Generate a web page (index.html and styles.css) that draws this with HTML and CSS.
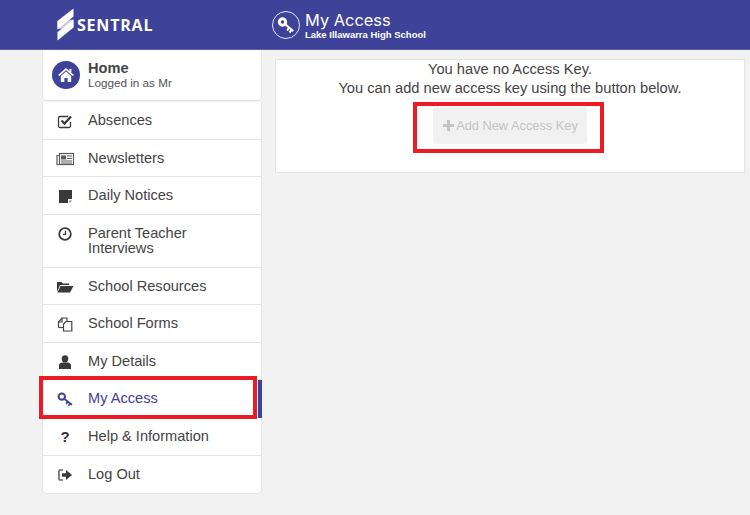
FILE: index.html
```html
<!DOCTYPE html>
<html>
<head>
    <title>My Access</title>
    <link rel="stylesheet" href="styles.css">
</head>
<body>
    <header class="topbar">
        <div class="brand">
            <svg class="brand-mark" width="17" height="33" viewBox="0 0 17 33">
                <polygon points="0.5,13 0.5,21 16.5,19.5 16.5,11.5" fill="#c6c8e5"></polygon>
                <polygon points="16.5,0.5 16.5,8.5 0.5,21.5 0.5,13" fill="#ffffff"></polygon>
                <polygon points="16.5,11.5 16.5,19.5 0.5,32.5 0.5,24" fill="#ffffff"></polygon>
            </svg>
            <span class="brand-name">SENTRAL</span>
        </div>
        <div class="page-title">
            <span class="title-icon">
                <svg width="18" height="18" viewBox="0 0 18 18" fill="none" stroke="#ffffff" stroke-linecap="round">
                    <circle cx="5.5" cy="6" r="3.2" stroke-width="3"></circle>
                    <path d="M8.5 8.5 L15.5 14.5 M12 11.5 L10.8 13.8 M14.5 13.5 L13.2 15.8" stroke-width="2.2"></path>
                </svg>
            </span>
            <div class="title-text">
                <h1>My Access</h1>
                <p>Lake Illawarra High School</p>
            </div>
        </div>
    </header>

    <div class="layout">
        <nav class="sidebar">
            <div class="home-card">
                <span class="home-icon">
                    <svg width="16" height="14" viewBox="0 0 16 14" fill="#ffffff">
                        <path d="M8 0 L16 7 L14.6 8 L8 2.3 L1.4 8 L0 7 Z"></path>
                        <path d="M2.8 8 L8 3.6 L13.2 8 V14 H9.6 V10 H6.4 V14 H2.8 Z"></path>
                        <rect x="11.4" y="0.8" width="2" height="3.4"></rect>
                    </svg>
                </span>
                <div>
                    <div class="home-title">Home</div>
                    <div class="home-sub">Logged in as Mr</div>
                </div>
            </div>
            <ul class="menu">
                <li>
                    <svg class="icon" viewBox="0 0 16 16" fill="none" stroke="#3a3a3a">
                        <path d="M13.5 9 V13 a1.5 1.5 0 0 1 -1.5 1.5 H3 a1.5 1.5 0 0 1 -1.5 -1.5 V5 a1.5 1.5 0 0 1 1.5 -1.5 H11" stroke-width="1.3"></path>
                        <path d="M4.5 7.5 L7.5 10.5 L14 3.5" stroke-width="2.3"></path>
                    </svg>
                    <span>Absences</span>
                </li>
                <li>
                    <svg class="icon icon-wide" viewBox="0 0 18 16" fill="none" stroke="#5a5a5a">
                        <rect x="3.5" y="2.5" width="14" height="11" stroke-width="1.2"></rect>
                        <path d="M3.5 4.5 H1 V13.5 H3.5" stroke-width="1.2"></path>
                        <rect x="5" y="4.5" width="5" height="4" fill="#5a5a5a" stroke="none"></rect>
                        <path d="M11 5 H16 M11 7.5 H16 M5 10 H16 M5 12 H16" stroke-width="1"></path>
                    </svg>
                    <span>Newsletters</span>
                </li>
                <li>
                    <svg class="icon" viewBox="0 0 16 16">
                        <path d="M2 2 H15 V11 L14.5 11 H11 V15 H2 Z" fill="#3a3a3a"></path>
                        <path d="M12.5 12.5 H15 L12.5 15 Z" fill="#4a78b8"></path>
                    </svg>
                    <span>Daily Notices</span>
                </li>
                <li class="tall">
                    <svg class="icon" viewBox="0 0 16 16" fill="none" stroke="#3a3a3a">
                        <circle cx="8" cy="8" r="5.8" stroke-width="1.8"></circle>
                        <path d="M8.5 4.8 V8.4 H6" stroke-width="1.3"></path>
                    </svg>
                    <span>Parent Teacher Interviews</span>
                </li>
                <li>
                    <svg class="icon icon-wide" viewBox="0 0 17 16" fill="#3a3a3a">
                        <path d="M0.5 13 V3 H5 L6.5 4.5 H12.5 V6 H3.5 Z"></path>
                        <path d="M4 7 H17 L13.5 13.5 H1 Z"></path>
                    </svg>
                    <span>School Resources</span>
                </li>
                <li>
                    <svg class="icon" viewBox="0 0 16 16" fill="none" stroke="#444444" stroke-width="1.2">
                        <path d="M1.5 11.5 V6 L5 2 H10 V5.5"></path>
                        <path d="M5 2 V6 H1.5"></path>
                        <path d="M1.5 11.5 H6.5"></path>
                        <path d="M6.5 15 V8 L9 5.5 H14.8 V15 Z"></path>
                    </svg>
                    <span>School Forms</span>
                </li>
                <li>
                    <svg class="icon" viewBox="0 0 16 16" fill="#3a3a3a">
                        <ellipse cx="8" cy="4.8" rx="3.3" ry="3.6"></ellipse>
                        <path d="M2 15 V11.5 Q2 8.8 5.5 8.5 H10.5 Q14 8.8 14 11.5 V15 Z"></path>
                    </svg>
                    <span>My Details</span>
                </li>
                <li class="active">
                    <svg class="icon" viewBox="0 0 16 16" fill="none" stroke="#3f4199" stroke-linecap="round">
                        <circle cx="4.8" cy="5.6" r="3.2" stroke-width="2"></circle>
                        <path d="M7.5 8 L14.5 13.5 M10.5 10.3 L9.5 12.4 M13 12.3 L12 14.2" stroke-width="1.7"></path>
                    </svg>
                    <span>My Access</span>
                </li>
                <li>
                    <span class="icon help-icon">?</span>
                    <span>Help &amp; Information</span>
                </li>
                <li class="last">
                    <svg class="icon" viewBox="0 0 16 16">
                        <path d="M6 3 H3 a1 1 0 0 0 -1 1 V12 a1 1 0 0 0 1 1 H6" fill="none" stroke="#666666" stroke-width="1.6"></path>
                        <path d="M5 6.2 H9 V3 L15 8 L9 13 V9.8 H5 Z" fill="#3a3a3a"></path>
                    </svg>
                    <span>Log Out</span>
                </li>
            </ul>
        </nav>

        <main class="content">
            <div class="panel">
                <p>You have no Access Key.</p>
                <p>You can add new access key using the button below.</p>
                <button class="add-key" disabled>
                    <svg width="11" height="11" viewBox="0 0 11 11" fill="#c4c4c4">
                        <path d="M4 0 H7 V4 H11 V7 H7 V11 H4 V7 H0 V4 H4 Z"></path>
                    </svg>
                    Add New Access Key
                </button>
            </div>
        </main>
    </div>

    <div class="mark mark-menu"></div>
    <div class="mark mark-button"></div>
</body>
</html>
```

FILE: styles.css
```css
* {
    box-sizing: border-box;
}
html, body {
    height: 100%;
}
body {
    margin: 0;
    background-color: #f2f2f2;
    color: #444444;
    font-family: "Liberation Sans", Arial, sans-serif;
    overflow: hidden;
}
.topbar {
    display: flex;
    align-items: center;
    height: 50px;
    background-color: #3f4299;
    border-bottom: 1px solid #5b5ea8;
    color: #ffffff;
}
.brand {
    display: flex;
    align-items: center;
    gap: 3px;
    width: 272px;
    padding-left: 57px;
}
.brand-name {
    font-family: "Open Sans", sans-serif;
    font-weight: 700;
    font-size: 16px;
    letter-spacing: 0.8px;
}
.page-title {
    display: flex;
    align-items: center;
    gap: 5px;
}
.title-icon {
    display: flex;
    align-items: center;
    justify-content: center;
    width: 28px;
    height: 28px;
    border: 1px solid #e6e6f3;
    border-radius: 50%;
}
.title-text {
    padding-top: 1px;
}
.title-text h1 {
    margin: 0;
    font-family: Inter, sans-serif;
    font-weight: 400;
    font-size: 16.4px;
    line-height: 20px;
}
.title-text p {
    margin: 0;
    font-size: 9.5px;
    font-weight: 700;
    line-height: 10px;
}
.layout {
    display: flex;
    padding-left: 42px;
}
.sidebar {
    width: 220px;
    flex-shrink: 0;
}
.home-card {
    display: flex;
    align-items: center;
    gap: 8px;
    height: 51px;
    padding-left: 9px;
    background-color: #ffffff;
    border: 1px solid #e4e4e4;
    border-top: none;
    border-radius: 0 0 5px 5px;
}
.home-icon {
    display: flex;
    align-items: center;
    justify-content: center;
    width: 28px;
    height: 28px;
    background-color: #3f4299;
    border-radius: 50%;
}
.home-title {
    font-size: 14.6px;
    font-weight: 700;
    line-height: 16px;
}
.home-sub {
    font-size: 11.7px;
    line-height: 14px;
    color: #555555;
}
.menu {
    margin: 1px 0 0;
    padding: 0;
    list-style: none;
    background-color: #ffffff;
    border: 1px solid #e4e4e4;
    border-top: none;
    border-radius: 0 0 5px 5px;
}
.menu li {
    position: relative;
    display: flex;
    align-items: flex-start;
    height: 37.6px;
    padding: 11px 8px 0 45px;
    font-size: 14.6px;
    line-height: 15px;
    border-bottom: 1px solid #e4e4e4;
}
.menu li.tall {
    height: 52.8px;
}
.menu li.last {
    border-bottom: none;
}
.menu li.active {
    color: #3f4199;
}
.menu li.active::after {
    content: "";
    position: absolute;
    top: 0;
    right: -1px;
    bottom: -1px;
    width: 4px;
    background-color: #3f4299;
}
.icon {
    position: absolute;
    left: 14px;
    top: 11px;
    width: 16px;
    height: 16px;
}
.icon-wide {
    left: 13px;
    width: 18px;
}
.help-icon {
    font-size: 15px;
    font-weight: 700;
    line-height: 16px;
    text-align: center;
    color: #333333;
}
.content {
    flex: 1;
    padding: 9px 5px 0 13px;
}
.panel {
    display: flex;
    flex-direction: column;
    align-items: center;
    height: 114px;
    background-color: #ffffff;
    border: 1px solid #e4e4e4;
    font-size: 14.7px;
    line-height: 19px;
}
.panel p {
    margin: 0;
}
.add-key {
    display: flex;
    align-items: center;
    gap: 2px;
    height: 37px;
    margin-top: 9px;
    padding: 0 9px 0 10px;
    background-color: #f1f1f1;
    border: none;
    border-radius: 3px;
    color: #c4c4c4;
    font-family: inherit;
    font-size: 12.8px;
}
.mark {
    position: absolute;
    border: 4px solid #ed1c24;
}
.mark-menu {
    left: 39px;
    top: 376px;
    width: 218px;
    height: 43px;
}
.mark-button {
    left: 413px;
    top: 102px;
    width: 191px;
    height: 51px;
}
```
